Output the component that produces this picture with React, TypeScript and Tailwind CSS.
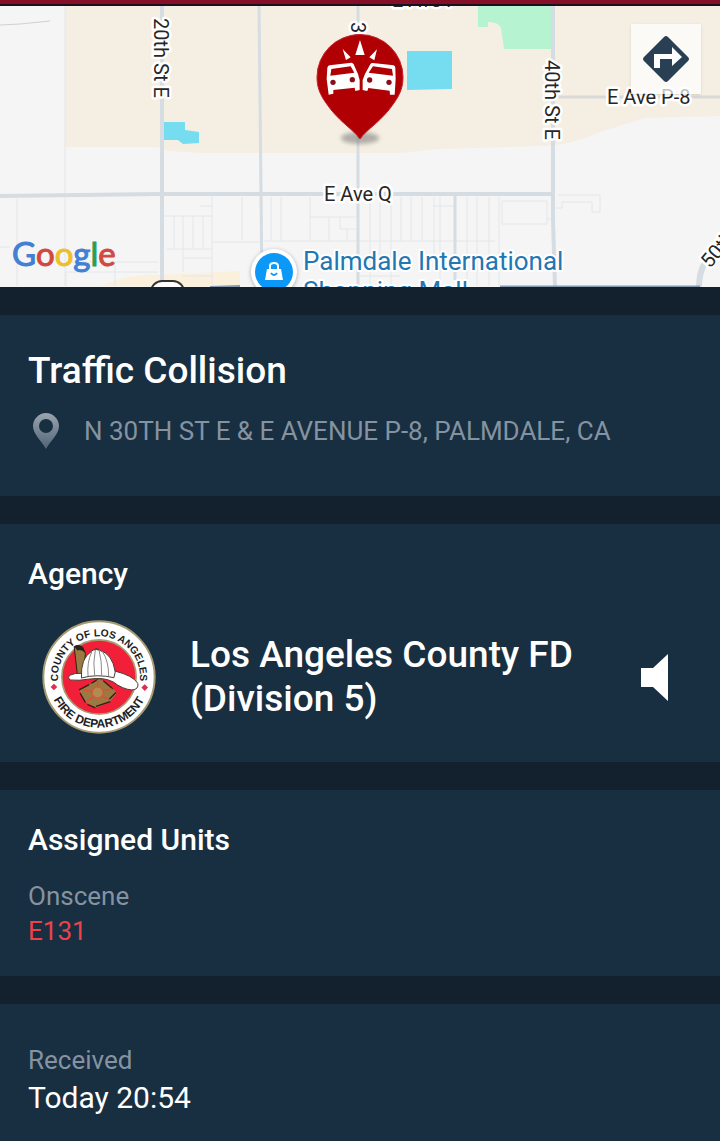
import type { ReactNode } from 'react';

interface Unit {
  id: string;
  status: string;
}

const units: Unit[] = [{ id: 'E131', status: 'Onscene' }];

const minorStreets = [
  'M17 199V286 M0 247H10 M66 272H158 M66 272V286 M115 265V286 M66 262H158',
  'M164 216H212 M174 216V248 M183 216V272 M193 216V248 M203 216V248 M212 196V286 M167 249H212 M183 258H212 M183 276H212 M200 206H212 M213 242H260 M242 197V240',
  'M264 241H495 M271 197V241 M281 197V241 M310 197V241 M310 217H357 M329 217V241 M340 217V229H357 M347 229V241',
  'M370 197V286 M380 197V270 M391 197V286 M401 197V241 M411 197V241 M422 197V241 M434 197V270 M440 197V286 M467 197V286 M477 197V286 M489 197V286 M433 206H455 M360 276H400',
  'M499 197V286 M502 201H547V224H502Z M547 219H553 M558 195H600V212H592V202H562V208H556',
];

function CollisionPin() {
  return (
    <g>
      <ellipse cx="360" cy="138" rx="19" ry="6" fill="#777" opacity=".55" filter="url(#soft)" />
      <path
        d="M360 139C353 129 338 121 326 103C319 93 317 86 317 77A43 42.500 0 0 1 403 77C403 86 401 93 394 103C382 121 367 129 360 139Z"
        fill="#b00004"
        stroke="#c8202a"
      />
      <g transform="translate(240 0) scale(.3333)" fill="#fff">
        <path d="M360 120L374 165H346Z M308 147L332 172L318 180Z M411 148L403 181L388 172Z" />
        <path d="M262 203Q263 197 269 196L334 188Q339 188 341 193L354 222L359 240V270L346 273L344 263L280 270V281L266 284L260 237Z" />
        <path d="M466 203Q466 198 461 196L398 189Q393 189 391 193L375 222L368 240V270L382 273L385 264L449 272L450 284L464 284L467 237Z" />
        <path d="M274 207L332 199L343 218L271 227Z M456 207L399 199L386 218L459 227Z" fill="#b00004" />
        <g fill="#8c0c18">
          <circle cx="279" cy="247" r="8" />
          <circle cx="337" cy="239" r="8" />
          <circle cx="389" cy="240" r="8" />
          <circle cx="447" cy="247" r="8" />
        </g>
      </g>
    </g>
  );
}

function StreetMap() {
  return (
    <svg
      viewBox="0 6 720 281"
      preserveAspectRatio="xMidYMid slice"
      className="block w-full bg-[#f5f5f5]"
      role="img"
      aria-label="Incident map"
    >
      <defs>
        <filter id="soft" x="-30%" y="-60%" width="160%" height="220%">
          <feGaussianBlur stdDeviation="2" />
        </filter>
      </defs>

      {/* Land and water */}
      <rect y="6" width="720" height="281" fill="#f5f5f5" />
      <path d="M65 6H720V116L645 118L600 132Q570 146 540 146L440 149L400 153H200L168 151L158 147H65Z" fill="#f5efe3" />
      <path d="M100 286Q130 273 158 275L240 271V287Z" fill="#fbf0dc" />
      <path d="M478 6H551V49H504L501 28Q499 22 488 22V27H478Z" fill="#b6f3d1" />
      <path d="M407 51H452V89L407 90Z" fill="#76dcf0" />
      <path d="M164 122H185V130L199 132V143L183 144L178 140H164Z" fill="#76dcf0" />

      {/* Roads */}
      <g fill="none" stroke="#e3e6e9">
        {minorStreets.map((d) => (
          <path key={d} d={d} />
        ))}
        <path d="M65 6V286" />
        <path d="M0 25L20 24L50 21" stroke="#d0d0d0" />
      </g>
      <g fill="none" stroke="#d5dce2" strokeWidth="4">
        <path d="M0 196L160 194H553" />
        <path d="M162 6V287" />
        <path d="M259 6L262 287" strokeWidth="3" />
        <path d="M358 6V287" strokeWidth="3" />
        <path d="M455 194V280" strokeWidth="3" />
        <path d="M553 6V220L555 287" />
        <path d="M553 97H720" stroke="#d9d9d9" strokeWidth="3" />
        <path d="M699 287Q699 272 705 263" strokeWidth="6" />
      </g>
      <path d="M500 287H700" stroke="#8499ae" strokeWidth="3" />
      <path d="M210 287L240 286" stroke="#8499ae" strokeWidth="2" />

      {/* Street names */}
      <g
        className="font-['Roboto',sans-serif] text-[20px]"
        fill="#262626"
        stroke="#fff"
        strokeWidth="5"
        strokeLinejoin="round"
        paintOrder="stroke"
      >
        <text x="392" y="7">E Ave P</text>
        <text x="324" y="201">E Ave Q</text>
        <text x="607" y="104">E Ave P-8</text>
        <text transform="translate(154 18) rotate(90)">20th St E</text>
        <text transform="translate(351 22) rotate(90)">30th St E</text>
        <text transform="translate(545 60) rotate(90)">40th St E</text>
        <text transform="translate(710 269) rotate(-50)">50th St E</text>
      </g>

      {/* Shopping mall */}
      <circle cx="274" cy="273" r="23" fill="#777" opacity=".6" filter="url(#soft)" />
      <circle cx="274" cy="272" r="23" fill="#fff" />
      <circle cx="274" cy="272" r="19" fill="#0c98f7" />
      <path d="M267 269H281L283 280H265Z" fill="#fff" />
      <path d="M270 270V266Q270 263 274 263T278 266V270" fill="none" stroke="#fff" strokeWidth="2" />
      <path d="M271 273Q274 277 277 273" fill="none" stroke="#0c98f7" strokeWidth="2" />
      <g
        className="font-['Roboto',sans-serif] text-[26px]"
        fill="#2277b3"
        stroke="#fff"
        strokeWidth="4"
        strokeLinejoin="round"
        paintOrder="stroke"
      >
        <text x="303" y="270">Palmdale International</text>
        <text x="303" y="300">Shopping Mall</text>
      </g>
      <rect x="151" y="281" width="33" height="30" rx="11" fill="#fff" stroke="#333" strokeWidth="2" />

      <text x="12" y="266" className="font-['Lato',sans-serif] text-[33px]" strokeWidth="1">
        <tspan fill="#4280d6" stroke="#4280d6">G</tspan>
        <tspan fill="#d04a40" stroke="#d04a40">o</tspan>
        <tspan fill="#ecc02a" stroke="#ecc02a">o</tspan>
        <tspan fill="#4280d6" stroke="#4280d6">g</tspan>
        <tspan fill="#2c9c55" stroke="#2c9c55">l</tspan>
        <tspan fill="#d04a40" stroke="#d04a40">e</tspan>
      </text>

      <CollisionPin />
    </svg>
  );
}

function DepartmentSeal() {
  return (
    <svg viewBox="35 31 344 344" className="size-[114px] shrink-0" role="img" aria-label="County of Los Angeles Fire Department">
      <defs>
        <path id="seal-top" d="M99 265A124 124 0 1 1 315 265" />
        <path id="seal-bottom" d="M54 203A153 153 0 0 0 360 203" />
      </defs>
      <circle cx="207" cy="203" r="168" fill="#fff" stroke="#a79b72" strokeWidth="6" />
      <circle cx="207" cy="203" r="112" fill="#f21f38" stroke="#a79b72" strokeWidth="5" />

      {/* Helmet */}
      <path d="M132 111Q145 103 158 113L166 132L158 209L143 207Z" fill="#9b7a42" stroke="#2b2118" strokeWidth="3" />
      <path d="M132 111Q145 103 158 113L165 130Q154 118 142 123Z" fill="#2b2118" />
      <path
        d="M118 198Q135 190 155 192L255 185Q310 199 324 222Q328 241 306 242Q278 240 250 218Q222 203 180 209Q145 215 119 212Q112 205 118 198Z"
        fill="#fff"
        stroke="#4a3a35"
        strokeWidth="3"
      />
      <path d="M154 206Q151 146 185 125Q192 117 208 122Q248 133 256 188L252 205Q200 193 154 206Z" fill="#fff" stroke="#4a3a35" strokeWidth="3" />
      <path d="M185 127Q170 160 174 201M196 121Q188 160 194 199M207 121Q216 155 215 199M216 124Q237 155 236 201" fill="none" stroke="#8d8785" strokeWidth="3" />
      <path d="M193 121Q197 113 207 120" fill="none" stroke="#4a3a35" strokeWidth="3" />

      {/* Maltese cross */}
      <path
        d="M205 210L222 215L259 248L259 254L240 278L199 296L168 279L148 243L180 226Z"
        fill="#9b7a42"
      />
      <path d="M177 226L147 242M150 252L166 280M172 286L196 296M198 292L241 277M238 270L258 250M249 239L220 214M184 222L203 211" fill="none" stroke="#2b2118" strokeWidth="4" />
      <path d="M160 242L186 247M170 276L190 263M216 262L238 272M222 242L248 240M202 212L204 232" stroke="#e8463f" strokeWidth="4" />
      <circle cx="203" cy="250" r="17" fill="#b18b50" stroke="#d6553c" strokeWidth="4" />

      <path d="M71 223L81 233L71 243L61 233Z M345 225L355 235L345 245L335 235Z" fill="#d9304f" />
      <g className="font-['Liberation_Sans',sans-serif] font-bold" fill="#1e1e1e" textAnchor="middle">
        <text className="text-[31px]">
          <textPath href="#seal-top" startOffset="50%">COUNTY OF LOS ANGELES</textPath>
        </text>
        <text className="text-[36px]">
          <textPath href="#seal-bottom" startOffset="50%">FIRE DEPARTMENT</textPath>
        </text>
      </g>
    </svg>
  );
}

function LocationPin() {
  return (
    <svg viewBox="0 0 28 36" className="h-9 w-7 shrink-0" aria-hidden="true">
      <defs>
        <linearGradient id="pin" x1="0" y1="0" x2="0" y2="1">
          <stop offset="0" stopColor="#9ba4ae" />
          <stop offset="1" stopColor="#4f6478" />
        </linearGradient>
      </defs>
      <path
        fillRule="evenodd"
        d="M14 0C21 0 27 6 27 13C27 21 19 27 14 36C9 27 1 21 1 13C1 6 7 0 14 0ZM14 6A7 7 0 1 0 14 20A7 7 0 1 0 14 6Z"
        fill="url(#pin)"
      />
    </svg>
  );
}

function Card({ children, className }: { children: ReactNode; className: string }) {
  return <section className={`bg-[#182e41] px-7 ${className}`}>{children}</section>;
}

export default function App() {
  return (
    <main className="flex min-h-screen flex-col bg-[#12212d] font-['Roboto',sans-serif] text-white">
      <div className="h-[6px] border-b-2 border-[#17101f] bg-[#850f27]" />

      <div className="relative">
        <StreetMap />
        <button
          type="button"
          aria-label="Directions"
          className="absolute top-[18px] right-[19px] flex size-[70px] items-center justify-center bg-white/70 shadow-sm"
        >
          <svg viewBox="0 0 48 48" className="size-12" aria-hidden="true">
            <path d="M22 2Q24 0 26 2L46 22Q48 24 46 26L26 46Q24 48 22 46L2 26Q0 24 2 22Z" fill="#293f54" />
            <path d="M12 33V19H30V12L40 22L30 31V24H18V33Z" fill="#fff" />
          </svg>
        </button>
      </div>

      <div className="flex grow flex-col gap-7 pt-7">
        <Card className="pt-8 pb-[45px]">
          <h1 className="text-[37px] leading-12 font-medium">Traffic Collision</h1>
          <div className="mt-4 flex items-center gap-6 pl-1">
            <LocationPin />
            <p className="text-[26px] leading-10 whitespace-nowrap text-[#8593a1]">
              N 30TH ST E &amp; E AVENUE P-8, PALMDALE, CA
            </p>
          </div>
        </Card>

        <Card className="pt-8 pb-7">
          <h2 className="text-[30px] leading-9 font-medium">Agency</h2>
          <div className="mt-7 flex items-center pr-[22px] pl-[14px]">
            <DepartmentSeal />
            <p className="grow pl-[34px] text-[37px] leading-11 font-medium">
              Los Angeles County FD
              <br />
              (Division 5)
            </p>
            <button type="button" aria-label="Listen to agency audio" className="shrink-0">
              <svg viewBox="0 0 30 48" className="h-12 w-[30px]" fill="#fff" aria-hidden="true">
                <path d="M1 15H13L28 1V48L13 34H1Z" />
              </svg>
            </button>
          </div>
        </Card>

        <Card className="pt-8 pb-7">
          <h2 className="text-[30px] leading-9 font-medium">Assigned Units</h2>
          {units.map((unit) => (
            <div key={unit.id} className="mt-5">
              <p className="text-[26px] leading-9 text-[#8593a1]">{unit.status}</p>
              <p className="text-[26px] leading-[34px] text-[#ee4149]">{unit.id}</p>
            </div>
          ))}
        </Card>

        <Card className="grow pt-[38px] pb-6">
          <p className="text-[26px] leading-9 text-[#8593a1]">Received</p>
          <p className="text-[30px] leading-10">Today 20:54</p>
        </Card>
      </div>
    </main>
  );
}
